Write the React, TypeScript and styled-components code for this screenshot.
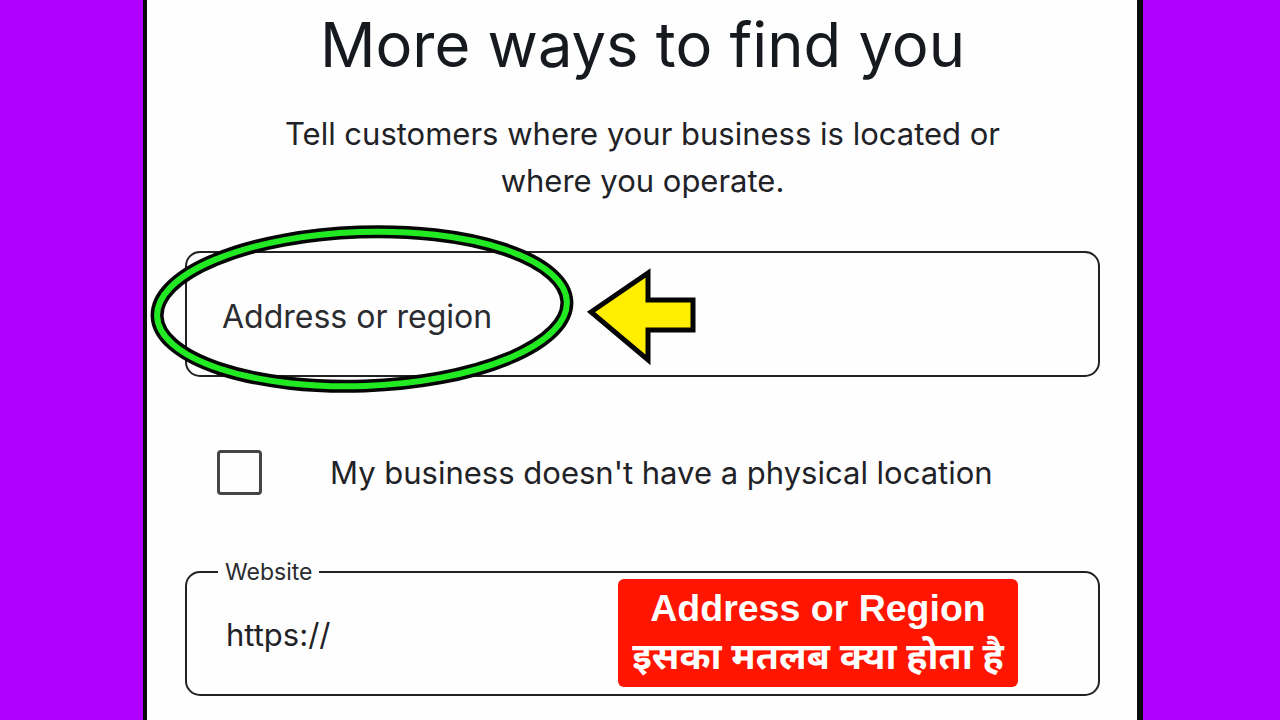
import React from "react";
import styled, { createGlobalStyle } from "styled-components";

const GlobalStyle = createGlobalStyle`
  html, body {
    margin: 0;
    padding: 0;
    background: #b000ff;
  }
  body {
    font-family: Inter, "Noto Sans", "Liberation Sans", sans-serif;
  }
`;

const Page = styled.div`
  display: flex;
  width: 1280px;
  height: 720px;
  padding-left: 143px;
  box-sizing: border-box;
  background: #b000ff;
  overflow: hidden;
`;

const Sheet = styled.main`
  width: 1000px;
  height: 720px;
  flex: none;
  box-sizing: border-box;
  background: #fefefe;
  border-left: 4px solid #0a0a0a;
  border-right: 6px solid #0a0a0a;
  padding: 14px 37px 0 38px;
  display: flex;
  flex-direction: column;
`;

const Title = styled.h1`
  margin: 0;
  font-size: 61.5px;
  line-height: 62px;
  font-weight: 400;
  color: #161a1f;
  text-align: center;
`;

const Subtitle = styled.p`
  margin: 34px auto 0;
  width: 730px;
  font-size: 31px;
  line-height: 47px;
  color: #1f2226;
  text-align: center;
`;

const FieldWrap = styled.div`
  position: relative;
  margin-top: 47px;
`;

const Field = styled.div`
  height: 126px;
  box-sizing: border-box;
  border: 2px solid #222;
  border-radius: 15px;
  display: flex;
  align-items: center;
  padding: 4px 0 0 35px;
  font-size: 32px;
  color: #2a2c30;
`;

const Overlay = styled.svg`
  position: absolute;
  pointer-events: none;
  overflow: visible;
`;

const CheckRow = styled.label`
  display: flex;
  align-items: center;
  gap: 68px;
  margin-top: 73px;
  padding-left: 32px;
  font-size: 31px;
  color: #1f2226;
`;

const Box = styled.span`
  width: 45px;
  height: 45px;
  box-sizing: border-box;
  border: 3px solid #454545;
  border-radius: 4px;
  flex: none;
`;

const WebField = styled.fieldset`
  position: relative;
  margin: 65px 0 0;
  height: 136px;
  box-sizing: border-box;
  border: 2px solid #222;
  border-radius: 15px;
  padding: 0 0 0 39px;
  min-width: 0;
`;

const Legend = styled.legend`
  margin-left: -8px;
  padding: 0 7px;
  font-size: 23px;
  line-height: 24px;
  color: #2a2c30;
`;

const WebValue = styled.div`
  font-size: 31px;
  line-height: 40px;
  margin-top: 31px;
  color: #1f2226;
`;

const Callout = styled.div`
  position: absolute;
  left: 431px;
  top: -5px;
  width: 400px;
  height: 108px;
  background: #ff1500;
  border-radius: 6px;
  color: #fff;
  font-family: "Liberation Sans", Arial, "Noto Sans", sans-serif;
  font-weight: 700;
  font-size: 37.5px;
  line-height: 44px;
  text-align: center;
  display: flex;
  flex-direction: column;
  justify-content: center;
  padding-top: 2px;
  box-sizing: border-box;
`;

const HindiLine = styled.span`
  font-family: "Noto Sans Devanagari", "Noto Sans", "Liberation Sans", sans-serif;
  font-size: 37.5px;
  line-height: 44px;
  margin-top: 8px;
`;

export default function App() {
  return (
    <>
      <GlobalStyle />
      <Page>
        <Sheet>
          <Title>More ways to find you</Title>
          <Subtitle>
            Tell customers where your business is located or where you operate.
          </Subtitle>

          <FieldWrap>
            <Field>Address or region</Field>
            {/* green highlight ring */}
            <Overlay
              width="440"
              height="180"
              viewBox="0 0 440 180"
              style={{ left: -43, top: -32 }}
            >
              <g transform="rotate(-2 220 90)">
                <ellipse cx="220" cy="90" rx="205" ry="77" fill="none" stroke="#050505" strokeWidth="13" />
                <ellipse cx="220" cy="90" rx="205" ry="77" fill="none" stroke="#22ea22" strokeWidth="6" />
              </g>
            </Overlay>
            {/* yellow pointer */}
            <Overlay
              width="120"
              height="100"
              viewBox="0 0 120 100"
              style={{ left: 398, top: 11 }}
            >
              <polygon
                points="8,50 65,11 65,38 110,38 110,68 65,68 65,98"
                fill="#ffee00"
                stroke="#050505"
                strokeWidth="5"
                strokeLinejoin="miter"
              />
            </Overlay>
          </FieldWrap>

          <CheckRow>
            <Box />
            My business doesn't have a physical location
          </CheckRow>

          <WebField>
            <Legend>Website</Legend>
            <WebValue>https://</WebValue>
            <Callout>
              <span>Address or Region</span>
              <HindiLine>इसका मतलब क्या होता है</HindiLine>
            </Callout>
          </WebField>
        </Sheet>
      </Page>
    </>
  );
}
